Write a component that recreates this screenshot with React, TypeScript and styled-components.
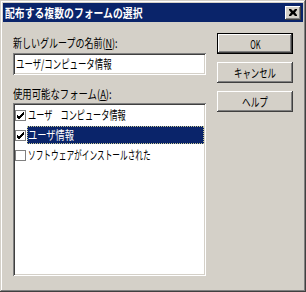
import React from "react";
import styled, { createGlobalStyle } from "styled-components";

const Global = createGlobalStyle`
  html, body { margin: 0; padding: 0; background: #d4d0c8; }
  body { font-family: "Noto Sans CJK JP", "Noto Sans", sans-serif; }
  * { box-sizing: border-box; }
`;

/* MS UI Gothic style: narrow glyphs, emulated by a horizontal squeeze */
const Txt = styled.span<{ $sx: number; $center?: boolean }>`
  display: inline-block;
  font-size: 12px;
  line-height: 14px;
  letter-spacing: 0;
  white-space: nowrap;
  transform: scaleX(${(p) => p.$sx});
  transform-origin: ${(p) => (p.$center ? "center" : "left")} center;
  u { text-decoration: underline; text-underline-offset: 1px; }
`;

const Window = styled.div`
  width: 306px;
  height: 292px;
  background: #d4d0c8;
  padding: 3px;
  box-shadow: inset -1px -1px #404040, inset 1px 1px #d4d0c8,
    inset -2px -2px #808080, inset 2px 2px #ffffff;
  display: flex;
  flex-direction: column;
`;

const TitleBar = styled.div`
  height: 19px;
  background: #0a246a;
  display: flex;
  align-items: center;
  justify-content: space-between;
  padding: 0 2px 0 2px;
  color: #fff;
  font-weight: bold;
`;

const CloseBtn = styled.div`
  width: 16px;
  height: 14px;
  background: #d4d0c8;
  box-shadow: inset -1px -1px #404040, inset 1px 1px #ffffff,
    inset -2px -2px #808080;
  display: flex;
  align-items: center;
  justify-content: center;
`;

const Body = styled.div`
  flex: 1;
  display: flex;
  padding: 11px 10px 0 10px;
  gap: 11px;
`;

const LeftCol = styled.div`
  width: 193px;
  display: flex;
  flex-direction: column;
  padding-top: 3px;
`;

const RightCol = styled.div`
  width: 76px;
  display: flex;
  flex-direction: column;
  gap: 8px;
`;

const Label = styled.div<{ $top?: number }>`
  height: 14px;
  color: #000;
  margin-top: ${(p) => p.$top ?? 0}px;
  margin-bottom: 2px;
  display: flex;
  align-items: center;
`;

const Sunken = styled.div`
  background: #fff;
  box-shadow: inset 1px 1px #808080, inset -1px -1px #ffffff,
    inset 2px 2px #404040, inset -2px -2px #d4d0c8;
`;

const Input = styled(Sunken)`
  height: 22px;
  margin-top: 1px;
  padding: 0 3px;
  display: flex;
  align-items: center;
  color: #000;
`;

const List = styled(Sunken)`
  height: 173px;
  padding: 2px;
  display: flex;
  flex-direction: column;
`;

const Row = styled.div`
  height: 20px;
  display: flex;
  align-items: center;
`;

const Box = styled.div`
  width: 11px;
  height: 11px;
  border: 1px solid #808080;
  background: #fff;
  display: flex;
  align-items: center;
  justify-content: center;
  flex: none;
`;

const ItemText = styled.div<{ $sel?: boolean }>`
  flex: 1;
  height: 18px;
  margin-left: 1px;
  padding-left: 1px;
  display: flex;
  align-items: center;
  overflow: hidden;
  color: ${(p) => (p.$sel ? "#fff" : "#000")};
  background: ${(p) => (p.$sel ? "#0a246a" : "transparent")};
  outline: ${(p) => (p.$sel ? "1px dotted #c8c890" : "none")};
  outline-offset: -1px;
`;

const Button = styled.div<{ $default?: boolean }>`
  height: 21px;
  background: #d4d0c8;
  display: flex;
  align-items: center;
  justify-content: center;
  color: #000;
  box-shadow: ${(p) =>
    p.$default
      ? "inset 1px 1px #000, inset -1px -1px #000, inset -2px -2px #404040, inset 2px 2px #ffffff, inset -3px -3px #808080"
      : "inset -1px -1px #404040, inset 1px 1px #ffffff, inset -2px -2px #808080"};
`;

const Check = () => (
  <svg width="9" height="9" viewBox="0 0 9 9">
    <path
      d="M1 4 L3 6 L8 1 M1 5 L3 7 L8 2 M1 6 L3 8 L8 3"
      stroke="#000"
      strokeWidth="1"
      fill="none"
      shapeRendering="crispEdges"
    />
  </svg>
);

const items = [
  { text: "ユーザ\u3000コンピュータ情報", checked: true, sel: false, sx: 0.68 },
  { text: "ユーザ情報", checked: true, sel: true, sx: 0.77 },
  { text: "ソフトウェアがインストールされた", checked: false, sel: false, sx: 0.64 },
];

export default function App() {
  return (
    <>
      <Global />
      <Window>
        <TitleBar>
          <Txt $sx={0.82}>配布する複数のフォームの選択</Txt>
          <CloseBtn>
            <svg width="8" height="7" viewBox="0 0 8 7">
              <path d="M0 0h2l2 2 2-2h2v1L6 3.5 8 6v1H6L4 5 2 7H0V6l2-2.5L0 1z" fill="#000" />
            </svg>
          </CloseBtn>
        </TitleBar>
        <Body>
          <LeftCol>
            <Label>
              <Txt $sx={0.75}>
                新しいグループの名前(<u>N</u>):
              </Txt>
            </Label>
            <Input>
              <Txt $sx={0.7}>ユーザ/コンピュータ情報</Txt>
            </Input>
            <Label $top={12}>
              <Txt $sx={0.78}>
                使用可能なフォーム(<u>A</u>):
              </Txt>
            </Label>
            <List>
              {items.map((it) => (
                <Row key={it.text}>
                  <Box>{it.checked && <Check />}</Box>
                  <ItemText $sel={it.sel}>
                    <Txt $sx={it.sx}>{it.text}</Txt>
                  </ItemText>
                </Row>
              ))}
            </List>
          </LeftCol>
          <RightCol>
            <Button $default>
              <Txt $sx={0.62} $center>OK</Txt>
            </Button>
            <Button>
              <Txt $sx={0.7} $center>キャンセル</Txt>
            </Button>
            <Button>
              <Txt $sx={0.72} $center>ヘルプ</Txt>
            </Button>
          </RightCol>
        </Body>
      </Window>
    </>
  );
}
